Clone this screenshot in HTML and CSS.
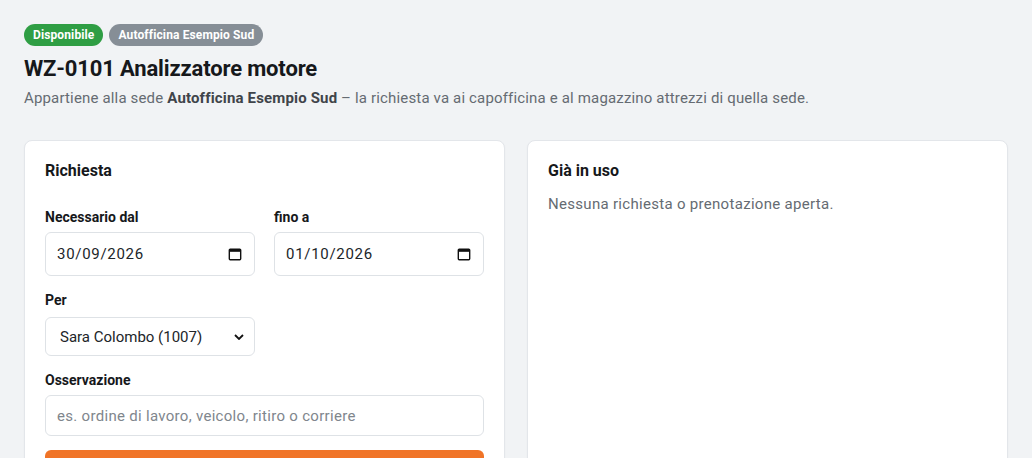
FILE: index.html
```html
<!DOCTYPE html>
<html lang="it">
<head>
<meta charset="utf-8">
<title>WZ-0101 Analizzatore motore</title>
<link rel="stylesheet" href="styles.css">
</head>
<body>
<main class="page">
  <div class="badges">
    <span class="badge badge-green">Disponibile</span>
    <span class="badge badge-grey">Autofficina Esempio Sud</span>
  </div>
  <h1 class="title">WZ-0101 Analizzatore motore</h1>
  <p class="subtitle">Appartiene alla sede <strong>Autofficina Esempio Sud</strong> – la richiesta va ai capofficina e al magazzino attrezzi di quella sede.</p>

  <div class="cards">
    <section class="card">
      <h2 class="card-title">Richiesta</h2>
      <div class="row row-first">
        <div class="field">
          <label class="label">Necessario dal</label>
          <div class="input date"><span>30/09/2026</span>
            <svg class="cal" viewBox="0 0 16 16" width="14" height="14"><rect x="1.5" y="2.5" width="13" height="12" rx="1" fill="none" stroke="#111" stroke-width="1.6"/><rect x="1.5" y="2.5" width="13" height="3" fill="#111"/></svg>
          </div>
        </div>
        <div class="field">
          <label class="label">fino a</label>
          <div class="input date"><span>01/10/2026</span>
            <svg class="cal" viewBox="0 0 16 16" width="14" height="14"><rect x="1.5" y="2.5" width="13" height="12" rx="1" fill="none" stroke="#111" stroke-width="1.6"/><rect x="1.5" y="2.5" width="13" height="3" fill="#111"/></svg>
          </div>
        </div>
      </div>
      <div class="row row-next">
        <div class="field">
          <label class="label label-select">Per</label>
          <div class="input select"><span>Sara Colombo (1007)</span>
            <svg class="chev" viewBox="0 0 10 6" width="10" height="6"><path d="M1 1l4 4 4-4" fill="none" stroke="#111" stroke-width="1.8"/></svg>
          </div>
        </div>
      </div>
      <div class="field full">
        <label class="label">Osservazione</label>
        <div class="input text placeholder">es. ordine di lavoro, veicolo, ritiro o corriere</div>
      </div>
      <div class="btn"></div>
    </section>
    <section class="card">
      <h2 class="card-title">Già in uso</h2>
      <p class="muted">Nessuna richiesta o prenotazione aperta.</p>
    </section>
  </div>
</main>
</body>
</html>
```
FILE: styles.css
```css
* { box-sizing: border-box; }
html, body { margin: 0; padding: 0; overflow: hidden; }
body {
  background: #f1f3f5;
  font-family: Roboto, "Liberation Sans", sans-serif;
  color: #1c1f23;
}
.page { padding: 24px 24px 0 24px; height: 458px; overflow: hidden; }
.badges { display: flex; gap: 6px; height: 22px; }
.badge {
  display: inline-flex; align-items: center;
  height: 22px; padding: 0 9px;
  border-radius: 11px;
  color: #fff; font-size: 12px; font-weight: 700; letter-spacing: 0.12px;
}
.badge-green { background: #2f9e44; }
.badge-grey { background: #868e96; }
.title {
  margin: 8px 0 0; font-size: 22px; font-weight: 700; line-height: 30px; color: #16181b;
  letter-spacing: -0.15px;
}
.subtitle {
  margin: 3px 0 0; font-size: 15px; line-height: 22px; color: #656b72; letter-spacing: 0.16px;
}
.subtitle strong { color: #3f444a; }
.cards {
  display: grid; grid-template-columns: minmax(0, 1fr) minmax(0, 1fr); gap: 22px;
  margin-top: 31px;
}
.card {
  background: #fff; border: 1px solid #e3e6ea; border-radius: 8px;
  box-shadow: 0 1px 2px rgba(0,0,0,0.04);
  padding: 20px 20px 0 20px; height: 330px;
}
.card-title { margin: 0; font-size: 16px; font-weight: 700; line-height: 20px; color: #16181b; }
.row { display: grid; grid-template-columns: minmax(0, 1fr) minmax(0, 1fr); gap: 19px; }
.field { display: flex; flex-direction: column; }
.row-first { margin-top: 27px; }
.row-next { margin-top: 15px; }
.label { font-size: 14px; font-weight: 700; line-height: 18px; color: #16181b; margin-bottom: 6px; }
.label-select { margin-bottom: 8px; }
.input {
  border: 1px solid #dee2e6; border-radius: 6px; background: #fff;
  display: flex; align-items: center; justify-content: space-between;
  font-size: 15px; color: #212529;
}
.date { height: 44px; padding: 0 12px 0 11px; letter-spacing: 0.7px; }
.select { height: 39px; padding: 0 10px 0 14px; }
.full { margin-top: 15px; }
.text { height: 41px; padding: 0 11px; letter-spacing: 0.3px; }
.placeholder { color: #80868d; }
.btn { margin-top: 14px; height: 30px; background: #f07427; border-radius: 6px; }
.muted { margin: 12px 0 0; font-size: 15px; line-height: 22px; color: #656b72; letter-spacing: 0.3px; }
```
